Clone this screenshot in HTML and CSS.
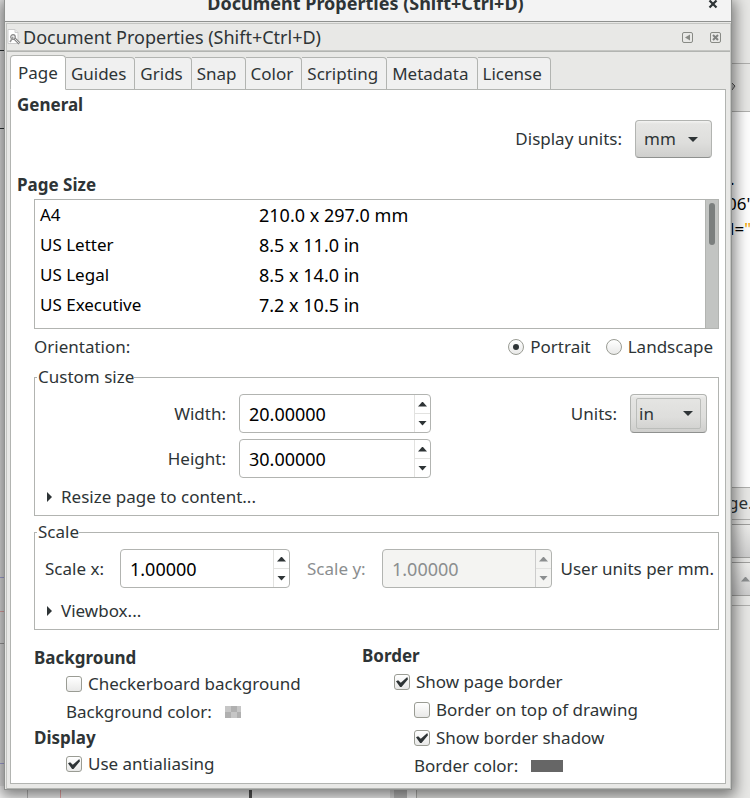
FILE: index.html
```html
<!DOCTYPE html>
<html lang="en">
<head>
<meta charset="utf-8">
<title>Document Properties</title>
<link rel="stylesheet" href="styles.css">
</head>
<body>
<div class="desktop" aria-hidden="true">
  <div class="canvas-left"><i class="rule rule-dark a"></i><i class="rule rule-dark b"></i><i class="rule rule-blue c"></i><i class="rule rule-red d"></i><i class="rule rule-grey e"></i><i class="rule rule-blue f"></i></div>
  <div class="canvas-bottom"><i class="guide guide-grey"></i><i class="guide guide-red"></i><i class="page-edge"></i><i class="track"></i></div>
  <div class="side">
    <div class="side-head"></div>
    <div class="side-tools"><svg width="8" height="12" viewBox="0 0 8 12"><path d="M0 2l2-1 3 3-3 4-2 1z" fill="#bbb" stroke="#555" stroke-width="1"/></svg></div>
    <div class="side-code"><span>.</span><span class="clipped">06"</span><span>l=<b>"</b></span></div>
    <div class="side-label">ge.</div>
    <div class="side-button"></div>
    <div class="side-button"><i class="tri up"></i></div>
    <div class="side-rest"></div>
  </div>
</div>

<main class="window">
  <header class="titlebar">
    <h1>Document Properties (Shift+Ctrl+D)</h1>
    <button class="close" aria-label="Close"><svg width="10" height="10" viewBox="0 0 10 10"><path d="M1.500 1.500l7 7M8.500 1.500l-7 7" stroke="#2e3436" stroke-width="2.200"/></svg></button>
  </header>
  <div class="dock">
    <div class="dock-head">
      <svg class="doc-icon" width="14" height="16" viewBox="0 0 14 16"><path d="M1 .5h7l3 3v11H1z" fill="#fff" stroke="#ccc"/><path d="M8 .5v3h3" fill="#eee" stroke="#ccc"/><path d="M7.500 9.500l5 5" stroke="#888" stroke-width="2.600"/><path d="M7.500 9.500l5 5" stroke="#ddd" stroke-width="1"/><circle cx="6" cy="8" r="2.300" fill="#eee" stroke="#888" stroke-width="1.200"/><path d="M3 13l3-5" stroke="#999" stroke-width="1.500"/></svg>
      <span class="dock-title">Document Properties (Shift+Ctrl+D)</span>
      <button aria-label="Iconify"><svg width="11" height="11" viewBox="0 0 11 11"><rect x=".5" y=".5" width="10" height="10" rx="1.500" fill="none" stroke="#888a85"/><path d="M8 2.500v6L3 5.500z" fill="#888a85"/></svg></button>
      <button aria-label="Close panel"><svg width="11" height="11" viewBox="0 0 11 11"><rect x=".5" y=".5" width="10" height="10" rx="1.500" fill="none" stroke="#888a85"/><path d="M3 3l5 5M8 3L3 8" stroke="#808280" stroke-width="2"/></svg></button>
    </div>
    <div class="dock-body">
      <div class="tabs" role="tablist">
        <button role="tab" aria-selected="true" class="tab active">Page</button>
        <button role="tab" class="tab">Guides</button>
        <button role="tab" class="tab">Grids</button>
        <button role="tab" class="tab">Snap</button>
        <button role="tab" class="tab">Color</button>
        <button role="tab" class="tab">Scripting</button>
        <button role="tab" class="tab">Metadata</button>
        <button role="tab" class="tab">License</button>
      </div>
      <div class="panel">
        <h2>General</h2>
        <div class="display-row">
          <label for="display-units">Display units:</label>
          <span class="combo"><select id="display-units"><option>mm</option></select><i class="tri down"></i></span>
        </div>
        <h2 class="size-title">Page Size</h2>
        <div class="inset">
          <div class="list">
            <table>
              <tbody>
                <tr><td>A4</td><td class="number">210.0 x 297.0 mm</td></tr>
                <tr><td>US Letter</td><td class="number">8.5 x 11.0 in</td></tr>
                <tr><td>US Legal</td><td class="number">8.5 x 14.0 in</td></tr>
                <tr><td>US Executive</td><td class="number">7.2 x 10.5 in</td></tr>
              </tbody>
            </table>
            <div class="scrollbar"><div class="thumb"></div></div>
          </div>
          <div class="orientation">
            <span class="grow">Orientation:</span>
            <label><input type="radio" name="orientation" checked>Portrait</label>
            <label><input type="radio" name="orientation">Landscape</label>
          </div>
          <fieldset>
            <legend>Custom size</legend>
            <div class="size-grid">
              <label for="width">Width:</label>
              <span class="spin"><input id="width" type="text" value="20.00000"><span class="steps"><button aria-label="Increase width"><i class="tri up"></i></button><button aria-label="Decrease width"><i class="tri down"></i></button></span></span>
              <label for="units">Units:</label>
              <span class="combo focused"><select id="units"><option>in</option></select><i class="tri down"></i></span>
              <label for="height">Height:</label>
              <span class="spin"><input id="height" type="text" value="30.00000"><span class="steps"><button aria-label="Increase height"><i class="tri up"></i></button><button aria-label="Decrease height"><i class="tri down"></i></button></span></span>
            </div>
            <button class="expander" aria-expanded="false"><i class="tri right"></i>Resize page to content...</button>
          </fieldset>
          <fieldset class="scale">
            <legend>Scale</legend>
            <div class="scale-row">
              <label for="scale-x">Scale x:</label>
              <span class="spin"><input id="scale-x" type="text" value="1.00000"><span class="steps"><button aria-label="Increase scale x"><i class="tri up"></i></button><button aria-label="Decrease scale x"><i class="tri down"></i></button></span></span>
              <label for="scale-y" class="dim">Scale y:</label>
              <span class="spin disabled"><input id="scale-y" type="text" value="1.00000" disabled><span class="steps"><button disabled aria-label="Increase scale y"><i class="tri up"></i></button><button disabled aria-label="Decrease scale y"><i class="tri down"></i></button></span></span>
              <span class="per-unit">User units per mm.</span>
            </div>
            <button class="expander" aria-expanded="false"><i class="tri right"></i>Viewbox...</button>
          </fieldset>
          <div class="columns">
            <section class="col-left">
              <h2>Background</h2>
              <label class="option"><input type="checkbox">Checkerboard background</label>
              <div class="option">Background color:<button class="swatch checker" aria-label="Background color"></button></div>
              <h2>Display</h2>
              <label class="option"><input type="checkbox" checked>Use antialiasing</label>
            </section>
            <section class="col-right">
              <h2>Border</h2>
              <label class="option"><input type="checkbox" checked>Show page border</label>
              <label class="option nested"><input type="checkbox">Border on top of drawing</label>
              <label class="option nested"><input type="checkbox" checked>Show border shadow</label>
              <div class="option nested">Border color:<button class="swatch solid" aria-label="Border color"></button></div>
            </section>
          </div>
        </div>
      </div>
    </div>
  </div>
</main>
</body>
</html>
```
FILE: styles.css
```css
* { box-sizing: border-box; }
html, body { height: 100%; }
body {
  margin: 0;
  overflow: hidden;
  position: relative;
  background: #e8e8e6;
  color: #2e3436;
  font: 17px/24px "Noto Sans", "Open Sans", sans-serif;
}
button, input, select { font: inherit; color: inherit; margin: 0; padding: 0; }
button { border: 0; background: none; }
svg { display: block; }
h1, h2 { margin: 0; font-size: 17px; font-weight: 700; }
h2 { line-height: 24px; }

/* Application behind the dialog */
.desktop { position: absolute; inset: 0; overflow: hidden; }
.canvas-left { position: absolute; left: 0; top: 0; bottom: 0; width: 6px; background: #e6e6e6; }
.rule { position: absolute; left: 0; width: 100%; height: 1px; }
.rule-dark { background: #2e3436; }
.rule-blue { background: #a9a9dd; }
.rule-red { background: #e8a9a9; }
.rule-grey { background: #a0a0a0; }
.a { top: 50px; } .b { top: 128px; } .c { top: 577px; } .d { top: 611px; } .e { top: 643px; } .f { top: 763px; }
.canvas-bottom { position: absolute; left: 0; bottom: 0; width: 417px; height: 12px; background: #f6f6f6; border-right: 1px solid #b0b0ae; }
.canvas-bottom i { position: absolute; top: 0; bottom: 0; width: 1px; }
.guide-grey { left: 27px; background: #bbb; }
.guide-red { left: 60px; background: #eaa; }
.canvas-bottom .page-edge { left: 249px; width: 3px; background: #555; }
.canvas-bottom .track { left: 390px; width: 17px; background: #bbb; border-left: 4px solid #ddd; }
.side { position: absolute; right: 0; top: 0; bottom: 0; width: 20px; display: flex; flex-direction: column; }
.side-head { height: 64px; border-bottom: 1px solid #b0b0ae; }
.side-tools { height: 48px; border-bottom: 1px solid #b0b0ae; padding-top: 18px; }
.side-code { height: 375px; background: #fff; color: #000; padding-top: 54px; display: flex; flex-direction: column; line-height: 25px; }
.side-code span { white-space: nowrap; }
.side-code .clipped { margin-left: -3px; }
.side-code b { color: #f5a300; font-weight: 400; }
.side-label { height: 33px; border: solid #b0b0ae; border-width: 1px 0; line-height: 30px; margin-bottom: 4px; text-indent: -2px; }
.side-button { height: 34px; border: solid #a0a09e; border-width: 1px 0; background: linear-gradient(#ededeb, #cecece); margin-bottom: 4px; display: flex; align-items: center; padding-left: 11px; color: #8b8e8f; }
.side-rest { flex: 1; border-top: 1px solid #b0b0ae; margin-top: 5px; }

/* Dialog */
.window {
  position: relative;
  margin: 0 18px 0 4px;
  border: 1px solid #8f918f;
  border-top: 0;
  background: #e8e8e6;
  box-shadow: 0 3px 14px 3px rgba(0, 0, 0, .5);
}
.titlebar { display: flex; height: 22px; border-bottom: 1px solid #8f918f; background: #f3f3f3; overflow: hidden; }
.titlebar h1 { flex: 1; text-align: center; font-size: 18px; line-height: 24px; margin: -9px -18px 0 0; }
.close { width: 10px; height: 10px; margin: -1px 13px 0 0; }
.dock { margin: 1px 0 0 1px; border: 1px solid #c4c5c2; border-width: 1px 1px 0; }
.dock-head { display: flex; align-items: center; height: 27px; border-bottom: 1px solid #c4c5c2; padding-right: 9px; }
.doc-icon { margin-right: 2px; }
.dock-title { flex: 1; font-size: 18px; }
.dock-head button { margin-left: 17px; }
.dock-body { border: solid #b2b4b1; border-width: 1px 0; padding: 3px 4px 4px 3px; }
.tabs { display: flex; align-items: flex-end; height: 35px; position: relative; z-index: 1; margin-bottom: -1px; }
.tab { height: 33px; padding: 0 8px 0 5px; background: #f0f0f0; border: 1px solid #b2b4b1; border-left: 0; border-top-right-radius: 4px; }
.tab.active { height: 35px; padding: 0 7px; background: #fff; border-left: 1px solid #b2b4b1; border-bottom-color: #fff; border-radius: 4px 4px 0 0; }
.panel { border: 1px solid #b2b4b1; background: #fff; padding: 3px 6px; }
.display-row { display: flex; align-items: center; justify-content: flex-end; gap: 13px; margin: 3px 7px 0 0; }
.display-row .combo { height: 38px; }
.size-title { margin-top: 15px; margin-bottom: 2px; }
.inset { margin-left: 17px; }

.tri { display: block; flex: none; background: currentColor; width: 9px; height: 5px; }
.tri.up { clip-path: polygon(50% 0, 100% 100%, 0 100%); }
.tri.down { clip-path: polygon(0 0, 100% 0, 50% 100%); }
.tri.right { width: 5px; height: 10px; clip-path: polygon(0 0, 100% 50%, 0 100%); }

.combo { position: relative; display: block; width: 77px; height: 39px; }
.combo select { appearance: none; width: 100%; height: 100%; padding-left: 8px; border: 1px solid #b2b4b1; border-bottom-color: #8f918f; border-radius: 4px; background: linear-gradient(#f4f4f3, #e5e5e3 8%, #dededc 60%, #cfcfcd); }
.combo .tri { position: absolute; right: 14px; top: 17px; width: 10px; height: 5px; pointer-events: none; }
.combo.focused::after { content: ""; position: absolute; inset: 4px 6px 4px 6px; border: 1px solid #bbbdba; border-radius: 2px; pointer-events: none; }

.list { display: flex; border: 1px solid #b2b4b1; height: 130px; color: #000; overflow: hidden; }
.list table { flex: 1; border-collapse: collapse; table-layout: fixed; height: 120px; }
.list td { padding: 0 0 0 5px; height: 30px; }
.list td:first-child { width: 219px; }
.list .number { font-size: 18px; }
.scrollbar { width: 13px; background: #c2c4c2; border-left: 1px solid #b2b4b1; padding: 3px; }
.thumb { width: 6px; height: 42px; border-radius: 3px; background: #7b7f7e; }

.orientation { display: flex; gap: 15px; margin: 6px 6px 9px 0; }
.grow { flex: 1; }
.orientation label, .option { display: flex; align-items: center; }
input[type="radio"], input[type="checkbox"] { appearance: none; flex: none; width: 16px; height: 16px; border: 1px solid #9a9c94; background: linear-gradient(#fff, #e9e9e8); display: grid; place-items: center; }
input[type="radio"] { border-radius: 50%; margin-right: 6px; }
input[type="radio"]:checked::before { content: ""; width: 6px; height: 6px; border-radius: 50%; background: #2e3436; }
input[type="checkbox"] { border-radius: 3px; margin-right: 6px; }
input[type="checkbox"]:checked::before { content: ""; width: 12px; height: 10px; background: #2e3436; clip-path: polygon(0 42%, 18% 32%, 40% 58%, 94% 0, 100% 22%, 46% 100%, 34% 100%); }

fieldset { min-width: 0; margin: 0 0 7px; padding: 8px 11px 6px 10px; border: 1px solid #b2b4b1; }
legend { line-height: 18px; padding: 0 0 0 1px; margin-left: -8px; }
.size-grid { display: grid; grid-template-columns: 181px 192px 1fr 77px; column-gap: 13px; row-gap: 6px; align-items: center; text-align: right; }
.spin { display: flex; height: 39px; border: 1px solid #b2b4b1; border-radius: 4px; background: #fff; color: #000; overflow: hidden; }
.spin input { flex: 1; min-width: 0; width: 0; border: 0; outline: 0; background: none; padding-left: 9px; font-size: 18px; }
.steps { width: 16px; border-left: 1px solid #e2e2e0; display: flex; flex-direction: column; color: #2e3436; }
.steps button { flex: 1; display: flex; align-items: center; justify-content: center; }
.steps button + button { border-top: 1px solid #e2e2e0; }
.disabled { background: #f4f4f2; color: #8b8e8f; }
.disabled .steps { color: #8b8e8f; border-color: #ccc; }
.dim { color: #8b8e8f; }
.expander { display: flex; align-items: center; gap: 9px; margin: 7px 0 0 2px; height: 24px; }
.scale { padding-right: 4px; margin-bottom: 14px; }
.scale-row { display: flex; align-items: center; }
.scale-row label { width: 62px; white-space: nowrap; }
.scale-row .spin { width: 170px; margin-left: 13px; }
.scale-row .dim { box-sizing: content-box; padding-left: 17px; }
.scale-row .per-unit { flex: 1; text-align: right; white-space: nowrap; }
.scale .expander { margin-top: 11px; }

.columns { display: grid; grid-template-columns: 328px 1fr; }
.col-left { padding-top: 2px; }
.option { height: 28px; margin-left: 32px; }
.option.nested { margin-left: 52px; }
.swatch { height: 12px; margin-left: 13px; }
.checker { width: 16px; background: conic-gradient(#b0b0b0 25%, #c6c6c6 0 50%, #b0b0b0 0 75%, #c6c6c6 0) 0 0 / 12px 12px; }
.solid { width: 32px; background: #666; }
```
